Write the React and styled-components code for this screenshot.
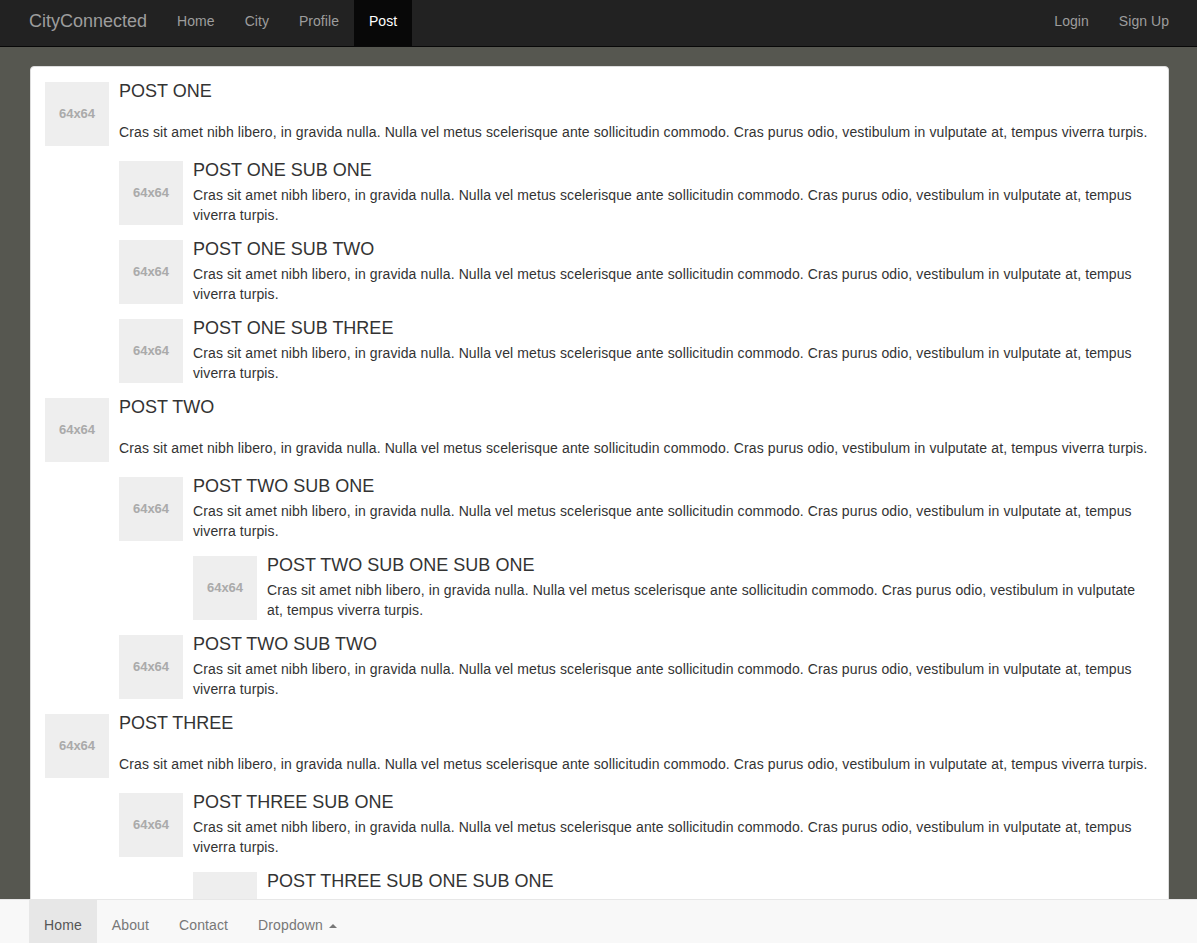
import React from "react";
import styled, { createGlobalStyle } from "styled-components";

const LOREM =
  "Cras sit amet nibh libero, in gravida nulla. Nulla vel metus scelerisque ante sollicitudin commodo. Cras purus odio, vestibulum in vulputate at, tempus viverra turpis.";

const posts = [
  {
    title: "POST ONE",
    children: [
      { title: "POST ONE SUB ONE" },
      { title: "POST ONE SUB TWO" },
      { title: "POST ONE SUB THREE" },
    ],
  },
  {
    title: "POST TWO",
    children: [
      {
        title: "POST TWO SUB ONE",
        children: [{ title: "POST TWO SUB ONE SUB ONE" }],
      },
      { title: "POST TWO SUB TWO" },
    ],
  },
  {
    title: "POST THREE",
    children: [
      {
        title: "POST THREE SUB ONE",
        children: [{ title: "POST THREE SUB ONE SUB ONE" }],
      },
    ],
  },
];

const GlobalStyle = createGlobalStyle`
  html, body {
    margin: 0;
    padding: 0;
  }
  body {
    background: #565750;
    font-family: "Liberation Sans", Arial, Helvetica, sans-serif;
    font-size: 14px;
    line-height: 20px;
    color: #333;
    padding-bottom: 60px;
  }
  * { box-sizing: border-box; }
`;

const TopBar = styled.nav`
  height: 47px;
  background: #222;
  border-bottom: 1px solid #080808;
  display: flex;
  align-items: stretch;
  padding: 0 13px 0 14px;
`;

const Brand = styled.a`
  font-size: 18px;
  line-height: 20px;
  color: #9d9d9d;
  padding: 11px 15px 15px 15px;
  text-decoration: none;
`;

const NavList = styled.ul`
  list-style: none;
  margin: 0;
  padding: 0;
  display: flex;
  margin-left: ${(p) => (p.$right ? "auto" : "0")};
`;

const NavLink = styled.a`
  display: block;
  height: 46px;
  padding: 13px 15px 0 15px;
  line-height: 17px;
  font-size: 14px;
  letter-spacing: 0.05px;
  text-decoration: none;
  color: ${(p) => (p.$active ? "#fff" : "#9d9d9d")};
  background: ${(p) => (p.$active ? "#080808" : "transparent")};
`;

const Page = styled.main`
  padding: 19px 28px 0 30px;
`;

const Panel = styled.section`
  background: #fff;
  border: 1px solid #ddd;
  border-radius: 4px;
  padding: 15px 14px 40px 14px;
`;

const Media = styled.div`
  display: flex;
  align-items: flex-start;
  margin-top: ${(p) => (p.$first ? "0" : "15px")};
`;

const Thumb = styled.div`
  flex: none;
  width: 64px;
  height: 64px;
  margin-right: 10px;
  background: #eee;
  color: #aaa;
  font-weight: bold;
  font-size: 13px;
  display: flex;
  align-items: center;
  justify-content: center;
`;

const Body = styled.div`
  flex: 1;
  min-width: 0;
`;

const Heading = styled.h4`
  font-size: 18px;
  font-weight: 500;
  line-height: 20px;
  margin: -1px 0 ${(p) => (p.$top ? "21px" : "5px")} 0;
  color: #333;
`;

const Text = styled.p`
  margin: 0;
  padding-bottom: ${(p) => (p.$top ? "4px" : "0")};
  letter-spacing: 0.11px;
`;

const Footer = styled.nav`
  position: fixed;
  left: 0;
  right: 0;
  bottom: 0;
  height: 44px;
  background: #f8f8f8;
  border-top: 1px solid #e7e7e7;
  display: flex;
  padding-left: 29px;
`;

const FootLink = styled.a`
  display: flex;
  align-items: flex-start;
  gap: 6px;
  padding: 15px 15px 0 15px;
  line-height: 20px;
  font-size: 14px;
  letter-spacing: 0.12px;
  text-decoration: none;
  color: ${(p) => (p.$active ? "#555" : "#777")};
  background: ${(p) => (p.$active ? "#e7e7e7" : "transparent")};
`;

const Caret = styled.span`
  display: inline-block;
  width: 0;
  height: 0;
  margin-top: 9px;
  border-left: 4px solid transparent;
  border-right: 4px solid transparent;
  border-bottom: 4px solid #777;
`;

function Post({ post, top, first }) {
  return (
    <Media $first={first}>
      <Thumb>64x64</Thumb>
      <Body>
        <Heading $top={top}>{post.title}</Heading>
        <Text $top={top}>{LOREM}</Text>
        {(post.children || []).map((c) => (
          <Post key={c.title} post={c} />
        ))}
      </Body>
    </Media>
  );
}

export default function App() {
  return (
    <>
      <GlobalStyle />
      <TopBar>
        <Brand href="#">CityConnected</Brand>
        <NavList>
          <li><NavLink href="#">Home</NavLink></li>
          <li><NavLink href="#">City</NavLink></li>
          <li><NavLink href="#">Profile</NavLink></li>
          <li><NavLink href="#" $active>Post</NavLink></li>
        </NavList>
        <NavList $right>
          <li><NavLink href="#">Login</NavLink></li>
          <li><NavLink href="#">Sign Up</NavLink></li>
        </NavList>
      </TopBar>
      <Page>
        <Panel>
          {posts.map((p, i) => (
            <Post key={p.title} post={p} top first={i === 0} />
          ))}
        </Panel>
      </Page>
      <Footer>
        <FootLink href="#" $active>Home</FootLink>
        <FootLink href="#">About</FootLink>
        <FootLink href="#">Contact</FootLink>
        <FootLink href="#">Dropdown <Caret /></FootLink>
      </Footer>
    </>
  );
}
